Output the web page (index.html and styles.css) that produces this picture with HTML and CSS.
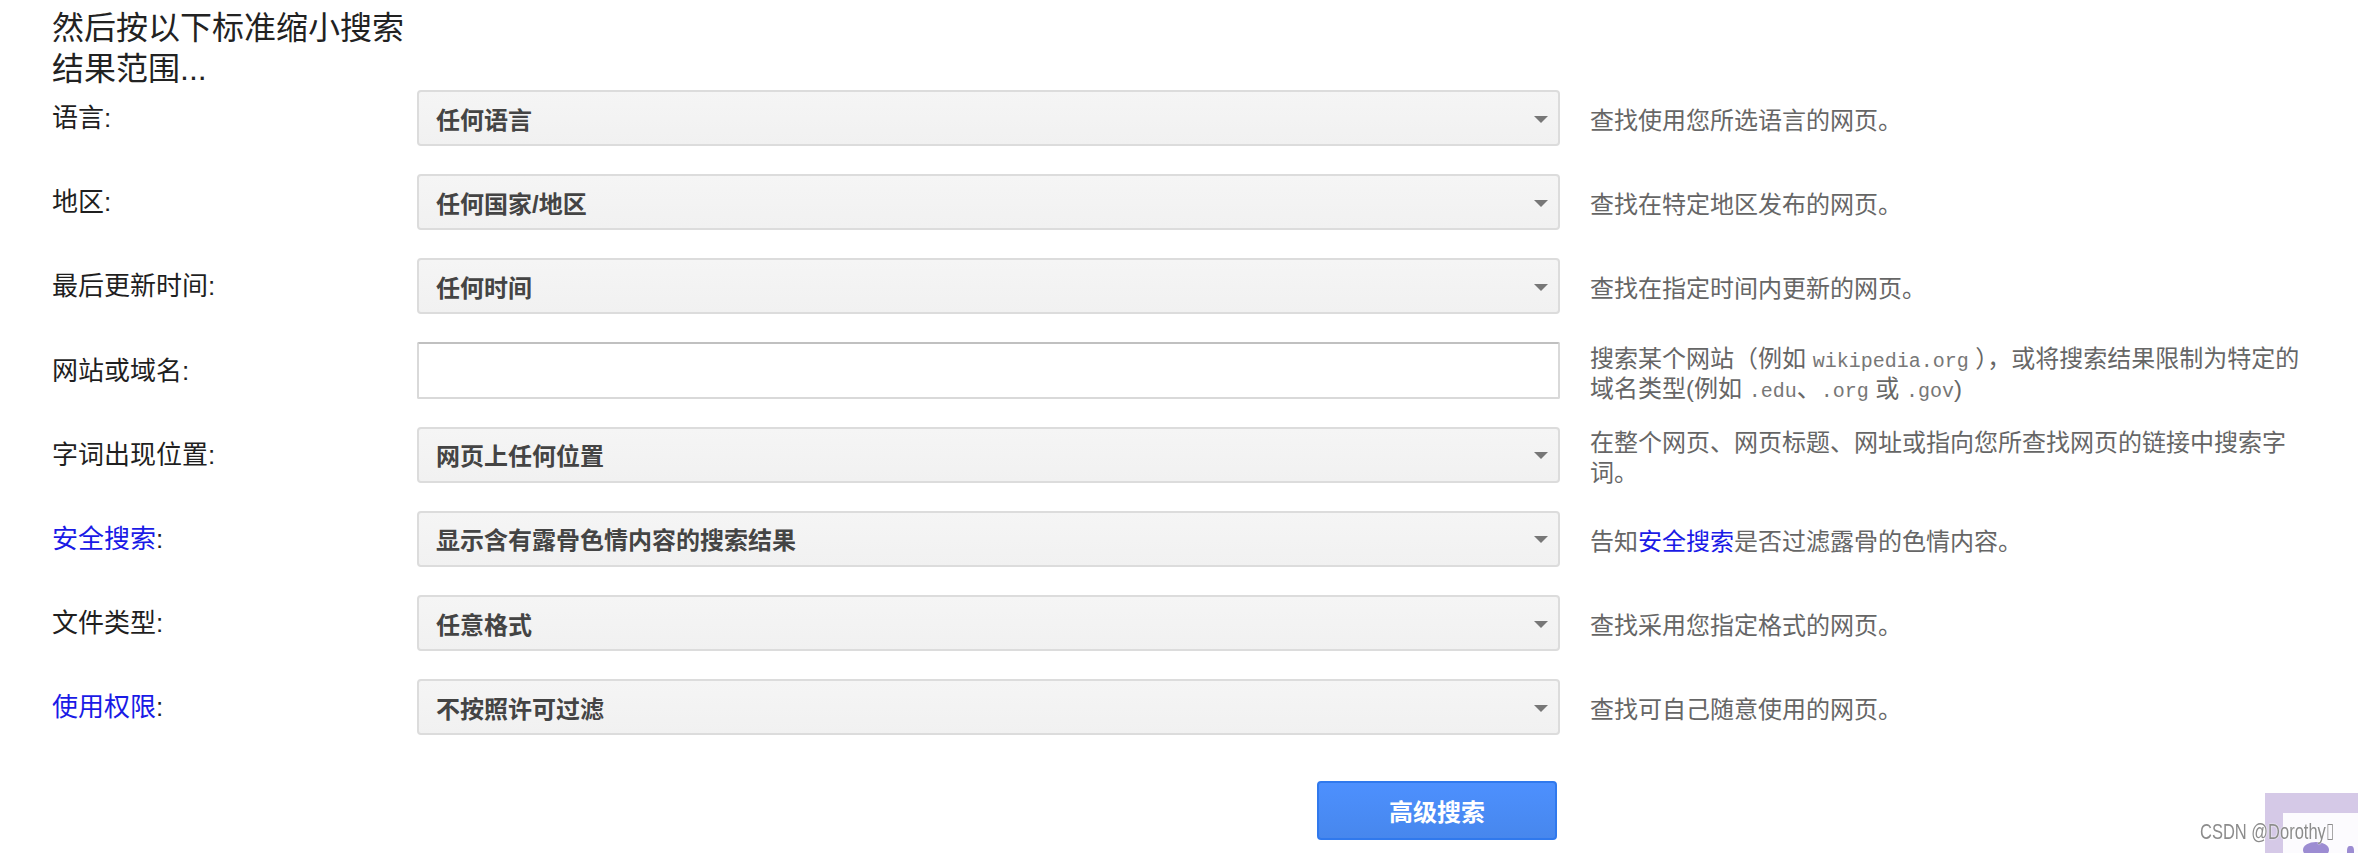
FILE: index.html
```html
<!DOCTYPE html>
<html lang="zh-CN">
<head>
<meta charset="utf-8">
<title>高级搜索</title>
<link rel="stylesheet" href="styles.css">
</head>
<body>
<div class="page">
  <h2 class="title">然后按以下标准缩小搜索结果范围...</h2>
  <div class="form">
    <div class="label">语言:</div>
    <div class="select"><span>任何语言</span><svg class="arrow" width="14" height="7" viewBox="0 0 14 7"><polygon points="0,0 14,0 7,7"/></svg></div>
    <div class="desc">查找使用您所选语言的网页。</div>

    <div class="label">地区:</div>
    <div class="select"><span>任何国家/地区</span><svg class="arrow" width="14" height="7" viewBox="0 0 14 7"><polygon points="0,0 14,0 7,7"/></svg></div>
    <div class="desc">查找在特定地区发布的网页。</div>

    <div class="label">最后更新时间:</div>
    <div class="select"><span>任何时间</span><svg class="arrow" width="14" height="7" viewBox="0 0 14 7"><polygon points="0,0 14,0 7,7"/></svg></div>
    <div class="desc">查找在指定时间内更新的网页。</div>

    <div class="label">网站或域名:</div>
    <input class="text-input" type="text">
    <div class="desc">搜索某个网站（例如 <code>wikipedia.org</code> ），或将搜索结果限制为特定的域名类型(例如 <code>.edu</code>、<code>.org</code> 或 <code>.gov</code>)</div>

    <div class="label">字词出现位置:</div>
    <div class="select"><span>网页上任何位置</span><svg class="arrow" width="14" height="7" viewBox="0 0 14 7"><polygon points="0,0 14,0 7,7"/></svg></div>
    <div class="desc">在整个网页、网页标题、网址或指向您所查找网页的链接中搜索字词。</div>

    <div class="label"><a class="link" href="#">安全搜索</a>:</div>
    <div class="select"><span>显示含有露骨色情内容的搜索结果</span><svg class="arrow" width="14" height="7" viewBox="0 0 14 7"><polygon points="0,0 14,0 7,7"/></svg></div>
    <div class="desc">告知<a class="link" href="#">安全搜索</a>是否过滤露骨的色情内容。</div>

    <div class="label">文件类型:</div>
    <div class="select"><span>任意格式</span><svg class="arrow" width="14" height="7" viewBox="0 0 14 7"><polygon points="0,0 14,0 7,7"/></svg></div>
    <div class="desc">查找采用您指定格式的网页。</div>

    <div class="label"><a class="link" href="#">使用权限</a>:</div>
    <div class="select"><span>不按照许可过滤</span><svg class="arrow" width="14" height="7" viewBox="0 0 14 7"><polygon points="0,0 14,0 7,7"/></svg></div>
    <div class="desc">查找可自己随意使用的网页。</div>
  </div>
  <div class="actions"><button class="btn" type="button">高级搜索</button></div>
</div>

<div class="wm-img">
  <div class="wm-inner"></div>
  <div class="wm-blob wm-blob1"></div>
  <div class="wm-blob wm-blob2"></div>
</div>
<div class="wm-text"><span class="wm-scale">CSDN @Dorothy<span class="tofu"></span></span></div>
</body>
</html>
```

FILE: styles.css
```css
html, body {
  margin: 0;
  padding: 0;
  background: #fff;
}
body {
  margin: 8px;
  font-family: "Liberation Sans", "Noto Sans CJK SC", sans-serif;
  color: #222;
  overflow: hidden;
}
.page {
  padding-left: 44px;
}
.title {
  margin: 0;
  width: 370px;
  font-size: 32px;
  line-height: 41px;
  font-weight: normal;
  color: #222;
}
.form {
  display: grid;
  grid-template-columns: 335px 1143px 732px;
  grid-auto-rows: 56px;
  column-gap: 30px;
  row-gap: 28.2px;
  align-items: center;
}
.label {
  font-size: 26px;
  line-height: 32px;
  color: #1f1f1f;
  white-space: nowrap;
}
.link {
  color: #1a1ae6;
  text-decoration: none;
}
.select {
  box-sizing: border-box;
  height: 56px;
  display: flex;
  align-items: center;
  justify-content: space-between;
  padding: 0 10px 0 17px;
  border: 2px solid #dcdcdc;
  border-radius: 4px;
  background: linear-gradient(#f5f5f5, #f1f1f1);
  font-size: 24px;
  font-weight: bold;
  color: #444;
}
.arrow {
  fill: #777;
  display: block;
  margin-top: 2px;
}
.text-input {
  box-sizing: border-box;
  height: 57px;
  width: 100%;
  margin: 0;
  border: 2px solid #d9d9d9;
  border-top-color: #c0c0c0;
  border-radius: 2px;
  background: #fff;
  font-size: 24px;
  padding: 0 14px;
  outline: none;
}
.desc {
  font-size: 24px;
  line-height: 30px;
  color: #666;
  padding-top: 6px;
}
.desc code {
  font-family: "Liberation Mono", monospace;
  font-size: 20px;
  line-height: 20px;
  color: #777;
}
.actions {
  width: 1508px;
  display: flex;
  justify-content: flex-end;
  margin-top: 46px;
}
.btn {
  box-sizing: border-box;
  width: 240px;
  height: 59px;
  margin-right: 3px;
  border: 2px solid #3079ed;
  border-radius: 4px;
  background: linear-gradient(#4d90fe, #4787ed);
  color: #fff;
  font-family: "Liberation Sans", "Noto Sans CJK SC", sans-serif;
  font-size: 24px;
  font-weight: bold;
  padding: 0;
}
.wm-img {
  position: fixed;
  right: 0;
  bottom: 0;
  width: 93px;
  height: 60px;
  background: #d5c9e7;
  overflow: hidden;
}
.wm-inner {
  position: absolute;
  left: 18px;
  top: 20px;
  right: 0;
  bottom: 0;
  background: #fcfbfe;
}
.wm-blob {
  position: absolute;
  background: #9c8cd2;
  border-radius: 50%;
}
.wm-blob1 {
  left: 38px;
  top: 49px;
  width: 26px;
  height: 16px;
}
.wm-blob2 {
  left: 82px;
  top: 53px;
  width: 7px;
  height: 12px;
  border-radius: 40%;
}
.wm-text {
  position: fixed;
  left: 2200px;
  top: 819px;
  font-family: "Liberation Sans", sans-serif;
  font-size: 22px;
  line-height: 26px;
  color: #8c8c8c;
  text-shadow: 0 0 2px #fff, 0 0 1px #fff;
  white-space: nowrap;
}
.wm-scale {
  display: inline-block;
  transform: scaleX(0.75);
  transform-origin: left center;
}
.tofu {
  display: inline-block;
  width: 7px;
  height: 16px;
  border: 1px solid #8c8c8c;
  box-sizing: border-box;
  margin-left: 2px;
  vertical-align: -1px;
}
```
